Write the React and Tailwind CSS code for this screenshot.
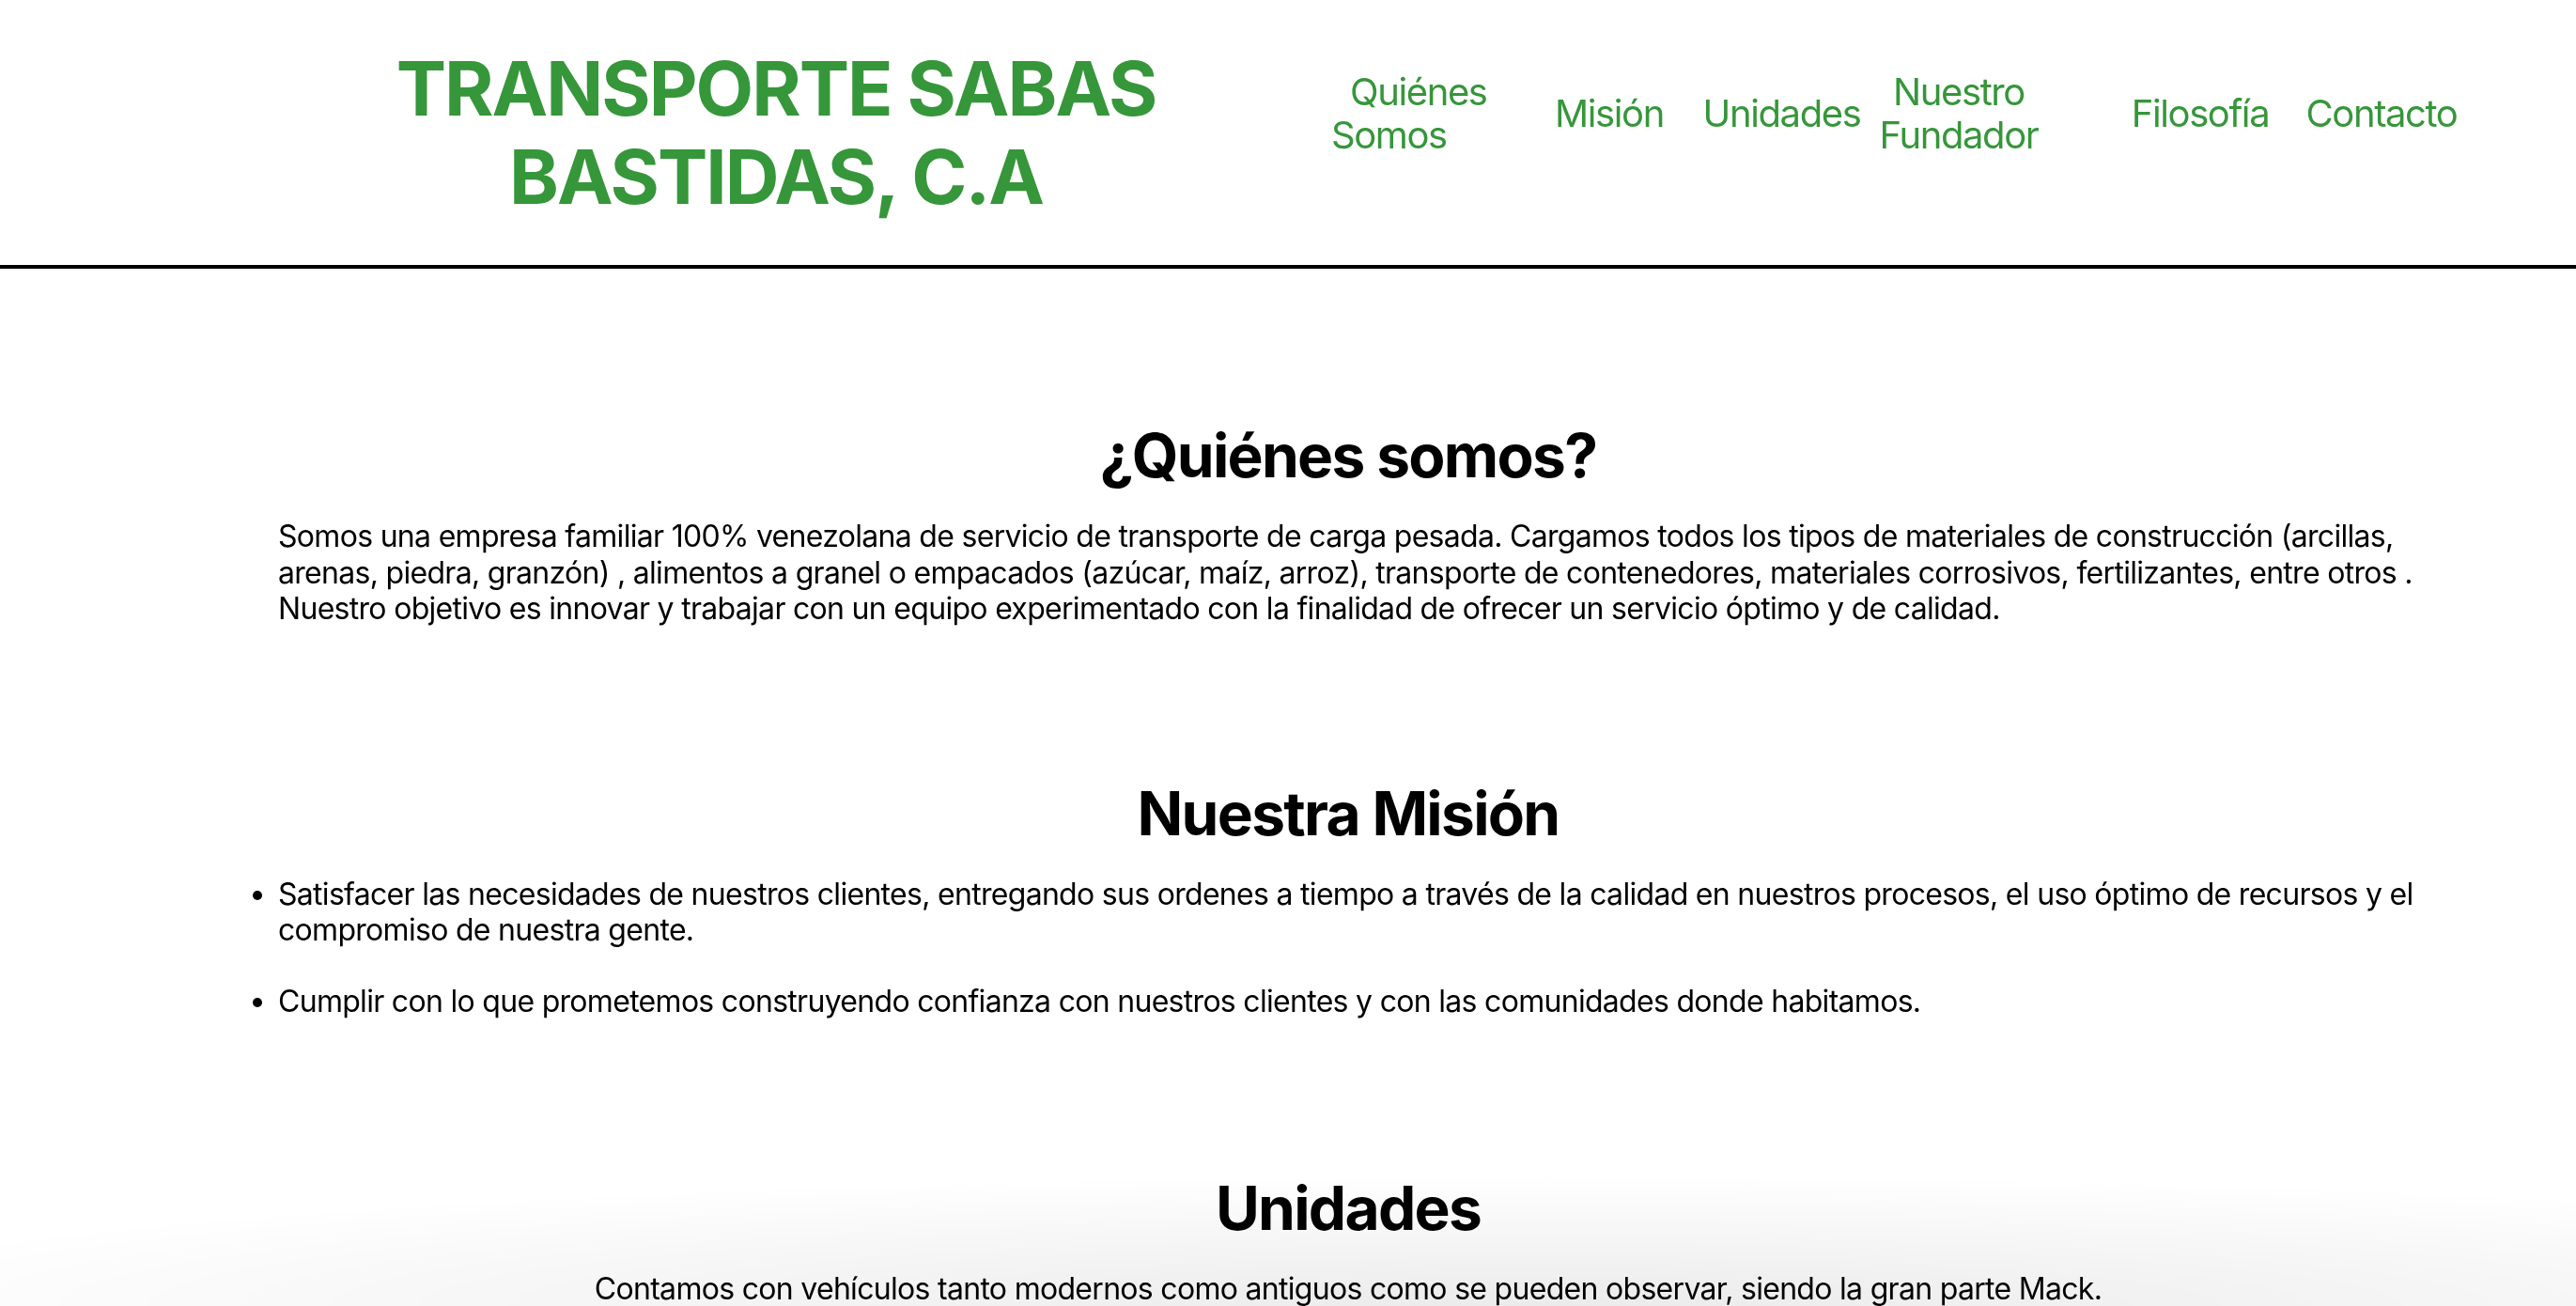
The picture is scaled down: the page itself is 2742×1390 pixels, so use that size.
const navItems = [
  { box: "w-[216px]", lines: ["Quiénes", "Somos"], left: true },
  { box: "ml-[7px] w-[198px]", lines: ["Misión"] },
  { box: "w-[169px]", lines: ["Unidades"] },
  { box: "w-[208px]", lines: ["Nuestro", "Fundador"] },
  { box: "ml-[53px] w-[200px]", lines: ["Filosofía"] },
  { box: "w-[186px]", lines: ["Contacto"] },
]

function Header() {
  return (
    <header className="flex h-[286px] items-start border-b-4 border-black">
      <div className="ml-[376px] w-[900px] pt-[47px] text-center text-[80px] font-bold leading-[94px] tracking-[-2px] text-[#36963a]">
        TRANSPORTE SABAS
        <br />
        BASTIDAS, C.A
      </div>
      <nav className="ml-[115px] mt-[75px] flex h-[92px] items-center whitespace-nowrap text-[40px] leading-[46px] tracking-[-1.4px] text-[#36963a]">
        {navItems.map(item => (
          <a
            key={item.lines.join(" ")}
            href="#"
            className={
              item.box +
              (item.left ? " pl-[26px] text-left" : " text-center")
            }
          >
            {item.lines.map((line, i) => (
              <span
                key={line}
                className={"block" + (item.left && i === 0 ? " pl-[20px]" : "")}
              >
                {line}
              </span>
            ))}
          </a>
        ))}
      </nav>
    </header>
  )
}

function Section({ title, className = "", children }) {
  return (
    <section className={className}>
      <h2 className="mb-[29px] text-center text-[64px] font-bold leading-[76px] tracking-[-1.7px]">{title}</h2>
      {children}
    </section>
  )
}

export default function App() {
  return (
    <div className="min-h-screen font-['Inter',sans-serif] text-black">
      <Header />

      <main className="ml-[296px] w-[2278px] pt-[161px] pb-[200px] text-[32px] leading-[38.5px] tracking-[-0.7px]">
        <Section title="¿Quiénes somos?">
          <p>
            Somos una empresa familiar 100% venezolana de servicio de transporte de carga pesada. Cargamos todos los tipos de materiales de construcción (arcillas, arenas, piedra, granzón) , alimentos a granel o empacados (azúcar, maíz, arroz), transporte de contenedores, materiales corrosivos, fertilizantes, entre otros . Nuestro objetivo es innovar y trabajar con un equipo experimentado con la finalidad de ofrecer un servicio óptimo y de calidad.
          </p>
        </Section>

        <Section title="Nuestra Misión" className="mt-[160px]">
          <ul className="list-disc space-y-[37px]">
            <li>
              Satisfacer las necesidades de nuestros clientes, entregando sus ordenes a tiempo a través de la calidad en nuestros procesos, el uso óptimo de recursos y el compromiso de nuestra gente.
            </li>
            <li>
              Cumplir con lo que prometemos construyendo confianza con nuestros clientes y con las comunidades donde habitamos.
            </li>
          </ul>
        </Section>

        <Section title="Unidades" className="mt-[163px]">
          <p className="text-center">
            Contamos con vehículos tanto modernos como antiguos como se pueden observar, siendo la gran parte Mack.
          </p>
        </Section>
      </main>

      <div className="pointer-events-none fixed inset-x-0 bottom-0 -z-10 h-[140px] bg-[radial-gradient(ellipse_70%_100%_at_60%_100%,rgba(0,0,0,0.08),rgba(0,0,0,0)_100%)]" />
    </div>
  )
}
